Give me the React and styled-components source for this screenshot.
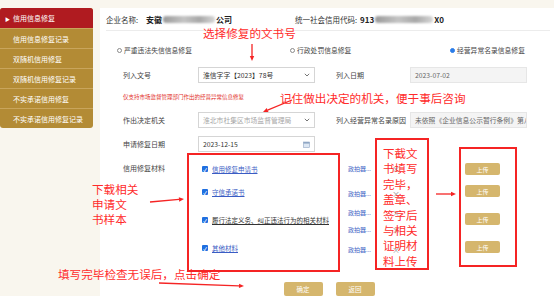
import React from "react";
import styled, { createGlobalStyle } from "styled-components";

const GlobalStyle = createGlobalStyle`
  html, body {
    margin: 0;
    padding: 0;
  }
  body {
    background: #f9f6ee;
    font-family: "Noto Sans CJK SC", "Noto Sans", sans-serif;
  }
`;

const Page = styled.div`
  position: relative;
  display: flex;
  align-items: flex-start;
  width: 554px;
  height: 296px;
  padding-top: 8px;
  box-sizing: border-box;
  overflow: hidden;
  background: #f9f6ee;
`;

const Sidebar = styled.nav`
  width: 93px;
  flex-shrink: 0;
  border-radius: 3px;
  overflow: hidden;
  background: #b38b35;
`;

const NavItem = styled.div`
  height: 20px;
  display: flex;
  align-items: center;
  gap: 3px;
  padding-left: ${(p) => (p.$active ? "5px" : "13px")};
  border-top: ${(p) => (p.$active ? "none" : "1px solid #c9a55c")};
  box-sizing: border-box;
  background: ${(p) => (p.$active ? "#b01b20" : "transparent")};
  color: #fff;
  font-size: 7px;
  white-space: nowrap;
`;

const Caret = styled.span`
  font-size: 5px;
`;

const Main = styled.main`
  flex: 1;
  height: 288px;
  margin-left: 7px;
  background: #fff;
  color: #333;
`;

const Header = styled.div`
  display: flex;
  align-items: center;
  height: 22px;
  margin: 0 4px 0 6px;
  border-bottom: 1px solid #ececec;
  font-size: 7.5px;
`;

const HeaderField = styled.div`
  display: flex;
  align-items: center;
  width: ${(p) => p.$w};
  white-space: nowrap;
`;

const HeaderValue = styled.b`
  display: flex;
  align-items: center;
  margin-left: ${(p) => p.$ml || "0"};
  font-size: 8px;
  color: #222;
`;

const Blur = styled.span`
  display: inline-block;
  width: ${(p) => p.$w};
  height: 7px;
  margin: 0 1px;
  border-radius: 3px;
  background: linear-gradient(90deg, #9a9a9a, #c4c4c4 40%, #a8a8a8 70%, #d6d6d6);
  filter: blur(1.2px);
`;

const RadioRow = styled.div`
  display: grid;
  grid-template-columns: 173px 160px auto;
  align-items: center;
  height: 14px;
  margin: 12px 0 0 17px;
  font-size: 6.8px;
  color: #444;
`;

const RadioOption = styled.label`
  display: flex;
  align-items: center;
  gap: 2px;
  white-space: nowrap;
`;

const RadioDot = styled.span`
  width: 5px;
  height: 5px;
  border-radius: 50%;
  box-sizing: border-box;
  border: ${(p) => (p.$on ? "1.5px solid #2b7de9" : "1px solid #8a8a8a")};
  background: ${(p) => (p.$on ? "#2b7de9" : "#fff")};
`;

const FormRow = styled.div`
  display: grid;
  grid-template-columns: 75px 117px 21px 74px 117px;
  align-items: center;
  height: ${(p) => p.$h || "16px"};
  margin-top: ${(p) => p.$mt};
  padding-left: 23px;
`;

const Label = styled.span`
  grid-column: ${(p) => p.$col || "auto"};
  font-size: 7px;
  color: #444;
  white-space: nowrap;
`;

const Field = styled.div`
  grid-column: ${(p) => p.$col};
  display: flex;
  align-items: center;
  justify-content: space-between;
  height: 16px;
  padding: 0 4px;
  box-sizing: border-box;
  border: 1px solid ${(p) => (p.$filled ? "#e6e6e6" : "#d5d5d5")};
  background: ${(p) => (p.$filled ? "#f4f4f4" : "#fff")};
  color: ${(p) => (p.$muted ? "#a8a8a8" : p.$filled ? "#666" : "#333")};
  font-size: 6.8px;
  white-space: nowrap;
  overflow: hidden;
`;

const Hint = styled.span`
  grid-column: 1 / span 3;
  font-size: 5.5px;
  color: #e2302b;
  white-space: nowrap;
`;

const Materials = styled.div`
  display: grid;
  grid-template-columns: 75px 150px 117px 35px;
  margin-top: 9px;
  padding-left: 23px;
`;

const Column = styled.div`
  display: flex;
  flex-direction: column;
`;

const MatLabel = styled(Label)`
  margin-top: 1px;
  line-height: 12px;
`;

const Item = styled.div`
  display: flex;
  align-items: center;
  gap: 4px;
  height: 12px;
  margin-top: ${(p) => p.$mt};
  padding-left: 4px;
  font-size: 6.5px;
  white-space: nowrap;
`;

const Check = styled.span`
  display: flex;
  align-items: center;
  justify-content: center;
  width: 6px;
  height: 6px;
  border-radius: 1px;
  background: #1f6fe0;
  color: #fff;
  font-size: 5px;
  font-weight: bold;
  line-height: 1;
`;

const ItemText = styled.span`
  color: ${(p) => (p.$plain ? "#333" : "#3a5cc4")};
  text-decoration: underline;
`;

const LinkRow = styled.div`
  display: flex;
  align-items: center;
  height: 10px;
  margin-top: ${(p) => p.$mt};
  font-size: 6px;
  white-space: nowrap;
`;

const Link = styled.span`
  width: 44px;
  color: #4062c4;
`;

const Cross = styled.span`
  color: #9a9a9a;
  font-size: 8px;
`;

const Upload = styled.button`
  width: 35px;
  height: 12px;
  margin-top: ${(p) => p.$mt};
  padding: 0;
  border: none;
  border-radius: 2px;
  background: #d5b66d;
  color: #fff;
  font-family: inherit;
  font-size: 6px;
`;

const ActionBar = styled.div`
  display: flex;
  justify-content: center;
  gap: 13px;
  margin-top: 28px;
  padding-left: 4px;
`;

const ActionButton = styled.button`
  width: 39px;
  height: 14px;
  padding: 0;
  border: none;
  border-radius: 2px;
  background: #d5b66d;
  color: #fff;
  font-family: inherit;
  font-size: 6.5px;
`;

/* red hand-drawn notes lying over the screenshot */
const Notes = styled.div`
  position: absolute;
  inset: 0;
  pointer-events: none;
`;

const Note = styled.div`
  position: absolute;
  left: ${(p) => p.$x}px;
  top: ${(p) => p.$y}px;
  color: #ff2b2b;
  font-size: 11.6px;
  line-height: ${(p) => p.$lh || "14px"};
  white-space: nowrap;
`;

const NoteBox = styled.div`
  position: absolute;
  left: ${(p) => p.$x}px;
  top: ${(p) => p.$y}px;
  width: ${(p) => p.$w}px;
  height: ${(p) => p.$h}px;
  box-sizing: border-box;
  border: 2px solid #f52424;
  padding: ${(p) => p.$pad || "0"};
  color: #ff2b2b;
  font-size: 11.5px;
  line-height: 15.4px;
`;

const ArrowLayer = styled.svg`
  position: absolute;
  left: 0;
  top: 0;
`;

const Chevron = () => (
  <svg width="6" height="4" viewBox="0 0 6 4">
    <path d="M0.8 0.8 L3 3 L5.2 0.8" fill="none" stroke="#666" strokeWidth="0.9" />
  </svg>
);

const Calendar = () => (
  <svg width="7" height="7" viewBox="0 0 7 7">
    <rect x="0.5" y="1" width="6" height="5.5" fill="#dde7f3" stroke="#8fa6c4" strokeWidth="0.6" />
    <rect x="0.5" y="1" width="6" height="1.6" fill="#8fa6c4" />
  </svg>
);

const Arrow = ({ x1, y1, x2, y2 }) => {
  const a = Math.atan2(y2 - y1, x2 - x1);
  const len = 5;
  const bx = x2 - Math.cos(a) * len;
  const by = y2 - Math.sin(a) * len;
  const px = Math.sin(a) * 2.2;
  const py = -Math.cos(a) * 2.2;
  return (
    <g>
      <line x1={x1} y1={y1} x2={bx} y2={by} stroke="#f52424" strokeWidth="1.3" />
      <polygon points={`${x2},${y2} ${bx + px},${by + py} ${bx - px},${by - py}`} fill="#f52424" />
    </g>
  );
};

const navItems = [
  "信用信息修复记录",
  "双随机信用修复",
  "双随机信用修复记录",
  "不实承诺信用修复",
  "不实承诺信用修复记录",
];

const materials = [
  { text: "信用修复申请书", mt: "2px" },
  { text: "守信承诺书", mt: "11px" },
  { text: "履行法定义务、纠正违法行为的相关材料", mt: "16px", plain: true },
  { text: "其他材料", mt: "16px" },
];

const linkGaps = ["2px", "15px", "9px", "7px", "10px"];
const uploadGaps = ["2px", "10px", "16px", "16px"];

const arrows = [
  { x1: 252, y1: 44, x2: 252, y2: 61 },
  { x1: 292, y1: 100, x2: 263, y2: 112 },
  { x1: 150, y1: 202, x2: 184, y2: 199 },
  { x1: 436, y1: 194, x2: 456, y2: 194 },
  { x1: 159, y1: 283, x2: 244, y2: 286 },
];

const App = () => (
  <Page>
    <GlobalStyle />
    <Sidebar>
      <NavItem $active>
        <Caret>▶</Caret>
        信用信息修复
      </NavItem>
      {navItems.map((t) => (
        <NavItem key={t}>{t}</NavItem>
      ))}
    </Sidebar>

    <Main>
      <Header>
        <HeaderField $w="189px">
          企业名称:
          <HeaderValue $ml="8px">
            安徽
            <Blur $w="52px" />
            公司
          </HeaderValue>
        </HeaderField>
        <HeaderField>
          统一社会信用代码:
          <HeaderValue $ml="3px">
            913
            <Blur $w="58px" />
            X0
          </HeaderValue>
        </HeaderField>
      </Header>

      <RadioRow>
        <RadioOption>
          <RadioDot />
          严重违法失信信息修复
        </RadioOption>
        <RadioOption>
          <RadioDot />
          行政处罚信息修复
        </RadioOption>
        <RadioOption>
          <RadioDot $on />
          经营异常名录信息修复
        </RadioOption>
      </RadioRow>

      <FormRow $mt="10px">
        <Label>列入文号</Label>
        <Field $col="2">
          淮信字字【2023】78号
          <Chevron />
        </Field>
        <Label $col="4">列入日期</Label>
        <Field $col="5" $filled>
          2023-07-02
        </Field>
      </FormRow>

      <FormRow $mt="9px" $h="10px">
        <Hint>仅支持市场监督管理部门作出的经营异常信息修复</Hint>
      </FormRow>

      <FormRow $mt="10px">
        <Label>作出决定机关</Label>
        <Field $col="2" $muted>
          淮北市杜集区市场监督管理局
          <Chevron />
        </Field>
        <Label $col="4">列入经营异常名录原因</Label>
        <Field $col="5" $filled>
          未依照《企业信息公示暂行条例》第八条
        </Field>
      </FormRow>

      <FormRow $mt="8px">
        <Label>申请修复日期</Label>
        <Field $col="2">
          2023-12-15
          <Calendar />
        </Field>
      </FormRow>

      <Materials>
        <Column>
          <MatLabel>信用修复材料</MatLabel>
        </Column>
        <Column>
          {materials.map((m) => (
            <Item key={m.text} $mt={m.mt}>
              <Check>✓</Check>
              <ItemText $plain={m.plain}>{m.text}</ItemText>
            </Item>
          ))}
        </Column>
        <Column>
          {linkGaps.map((g, i) => (
            <LinkRow key={i} $mt={g}>
              <Link>政拍器...</Link>
              <Cross>×</Cross>
            </LinkRow>
          ))}
        </Column>
        <Column>
          {uploadGaps.map((g, i) => (
            <Upload key={i} $mt={g}>
              上传
            </Upload>
          ))}
        </Column>
      </Materials>

      <ActionBar>
        <ActionButton>确定</ActionButton>
        <ActionButton>返回</ActionButton>
      </ActionBar>
    </Main>

    <Notes>
      <Note $x={203} $y={26}>选择修复的文书号</Note>
      <Note $x={280} $y={91}>记住做出决定的机关，便于事后咨询</Note>
      <Note $x={92} $y={182} $lh="15px">
        下载相关
        <br />
        申请文
        <br />
        书样本
      </Note>
      <Note $x={58} $y={267}>填写完毕检查无误后，点击确定</Note>
      <NoteBox $x={187} $y={153} $w={153} $h={119} />
      <NoteBox $x={375} $y={138} $w={54} $h={132} $pad="6px 0 0 6px">
        下截文
        <br />
        书填写
        <br />
        完毕，
        <br />
        盖章、
        <br />
        签字后
        <br />
        与相关
        <br />
        证明材
        <br />
        料上传
      </NoteBox>
      <NoteBox $x={459} $y={147} $w={58} $h={120} />
      <ArrowLayer width="554" height="296">
        {arrows.map((a, i) => (
          <Arrow key={i} {...a} />
        ))}
      </ArrowLayer>
    </Notes>
  </Page>
);

export default App;
